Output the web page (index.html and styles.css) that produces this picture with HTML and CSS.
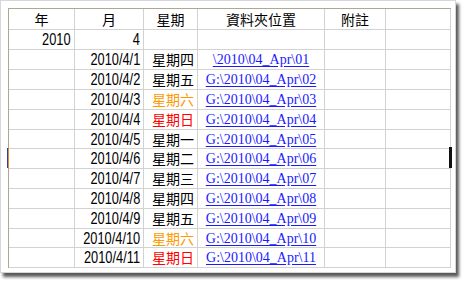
FILE: index.html
```html
<!DOCTYPE html>
<html lang="zh-Hant">
<head>
<meta charset="utf-8">
<title>資料夾位置</title>
<link rel="stylesheet" href="styles.css">
</head>
<body>
<div class="frame">
  <div class="sheet">
    <div class="c hd">年</div><div class="c hd">月</div><div class="c hd">星期</div><div class="c hd">資料夾位置</div><div class="c hd">附註</div><div class="c"></div>

    <div class="c num"><span class="n">2010</span></div><div class="c num"><span class="n">4</span></div><div class="c"></div><div class="c"></div><div class="c"></div><div class="c"></div>

    <div class="c"></div><div class="c num"><span class="n">2010/4/1</span></div><div class="c day">星期四</div><div class="c lk"><a href="#">\2010\04_Apr\01</a></div><div class="c"></div><div class="c"></div>
    <div class="c"></div><div class="c num"><span class="n">2010/4/2</span></div><div class="c day">星期五</div><div class="c lk"><a href="#">G:\2010\04_Apr\02</a></div><div class="c"></div><div class="c"></div>
    <div class="c"></div><div class="c num"><span class="n">2010/4/3</span></div><div class="c day sat">星期六</div><div class="c lk"><a href="#">G:\2010\04_Apr\03</a></div><div class="c"></div><div class="c"></div>
    <div class="c"></div><div class="c num"><span class="n">2010/4/4</span></div><div class="c day sun">星期日</div><div class="c lk"><a href="#">G:\2010\04_Apr\04</a></div><div class="c"></div><div class="c"></div>
    <div class="c"></div><div class="c num"><span class="n">2010/4/5</span></div><div class="c day">星期一</div><div class="c lk"><a href="#">G:\2010\04_Apr\05</a></div><div class="c"></div><div class="c"></div>
    <div class="c"></div><div class="c num"><span class="n">2010/4/6</span></div><div class="c day">星期二</div><div class="c lk"><a href="#">G:\2010\04_Apr\06</a></div><div class="c"></div><div class="c"></div>
    <div class="c"></div><div class="c num"><span class="n">2010/4/7</span></div><div class="c day">星期三</div><div class="c lk"><a href="#">G:\2010\04_Apr\07</a></div><div class="c"></div><div class="c"></div>
    <div class="c"></div><div class="c num"><span class="n">2010/4/8</span></div><div class="c day">星期四</div><div class="c lk"><a href="#">G:\2010\04_Apr\08</a></div><div class="c"></div><div class="c"></div>
    <div class="c"></div><div class="c num"><span class="n">2010/4/9</span></div><div class="c day">星期五</div><div class="c lk"><a href="#">G:\2010\04_Apr\09</a></div><div class="c"></div><div class="c"></div>
    <div class="c"></div><div class="c num"><span class="n">2010/4/10</span></div><div class="c day sat">星期六</div><div class="c lk"><a href="#">G:\2010\04_Apr\10</a></div><div class="c"></div><div class="c"></div>
    <div class="c"></div><div class="c num"><span class="n">2010/4/11</span></div><div class="c day sun">星期日</div><div class="c lk"><a href="#">G:\2010\04_Apr\11</a></div><div class="c"></div><div class="c"></div>

    <div class="mark-left"></div>
    <div class="mark-right"></div>
  </div>
</div>
</body>
</html>
```

FILE: styles.css
```css
html, body {
  margin: 0;
  padding: 0;
  background: #ffffff;
}

body {
  width: 464px;
  height: 281px;
  overflow: hidden;
}

.frame {
  box-sizing: border-box;
  width: 456px;
  height: 273px;
  padding: 7px 0 0 7px;
  background: #ffffff;
  border: 1px solid #d6d6d6;
  box-shadow: 3px 4px 3px rgba(0, 0, 0, 0.65);
}

.sheet {
  position: relative;
  display: grid;
  width: max-content;
  grid-template-columns: 65px 68px 53px 126px 60px 64px;
  grid-template-rows: 20px 19px 19px 19px 19px 19px 18px 19px 19px 19px 19px 18px 19px;
  gap: 1px;
  padding: 0 1px 1px 0;
  background: #d2d2d2;
  border-left: 1px solid #aca98f;
  border-top: 1px solid #aca98f;
}

.c {
  background: #ffffff;
  overflow: hidden;
  white-space: nowrap;
  line-height: 19px;
  color: #000000;
}

.hd {
  text-align: center;
  font-family: "Noto Sans CJK TC", "Noto Sans CJK SC", sans-serif;
  font-size: 14px;
  line-height: 20px;
}

.num {
  display: flex;
  justify-content: flex-end;
  align-items: center;
  padding-right: 3px;
  font-family: "Liberation Sans", Arial, sans-serif;
  font-size: 16px;
}

.n {
  flex: none;
  display: inline-block;
  transform: scaleX(0.8);
  transform-origin: right center;
}

.day {
  padding-left: 8px;
  font-family: "Noto Sans CJK TC", "Noto Sans CJK SC", sans-serif;
  font-size: 14px;
}

.sat {
  color: #ff9900;
}

.sun {
  color: #ff0000;
}

.lk {
  text-align: center;
  font-family: "Liberation Serif", "Times New Roman", serif;
  font-size: 14px;
}

.lk a {
  color: #1a1aff;
  text-decoration: underline;
  text-underline-offset: 2px;
}

.mark-left {
  position: absolute;
  left: -2px;
  top: 139px;
  width: 1px;
  height: 20px;
  background: #3a3a9a;
  border-right: 1px solid #e08a2a;
}

.mark-right {
  position: absolute;
  left: 440px;
  top: 138px;
  width: 3px;
  height: 21px;
  background: #111111;
}
```
